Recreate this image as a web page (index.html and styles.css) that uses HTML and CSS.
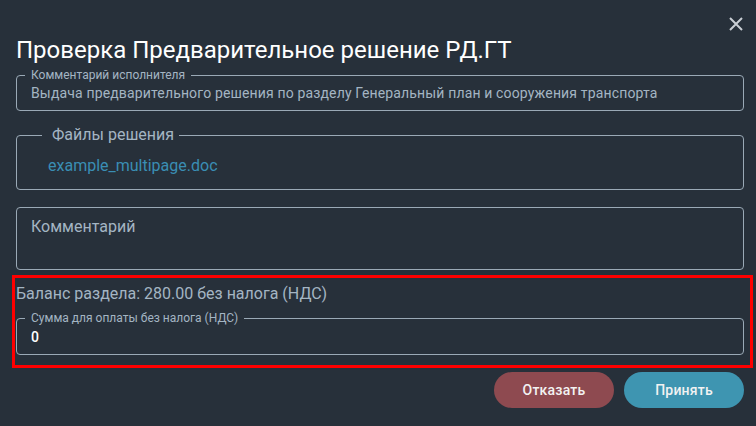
FILE: index.html
```html
<!DOCTYPE html>
<html lang="ru">
<head>
<meta charset="utf-8">
<link rel="stylesheet" href="styles.css">
</head>
<body>
<div class="dialog">
  <button class="close" aria-label="close">
    <svg width="14" height="14" viewBox="0 0 14 14"><path d="M1 1L13 13M13 1L1 13" stroke="#c9ced4" stroke-width="2" fill="none"/></svg>
  </button>
  <h1 class="title">Проверка Предварительное решение РД.ГТ</h1>
  <fieldset class="field small">
    <legend>Комментарий исполнителя</legend>
    <div class="value">Выдача предварительного решения по разделу Генеральный план и сооружения транспорта</div>
  </fieldset>
  <fieldset class="field files">
    <legend>Файлы решения</legend>
    <a class="link" href="#">example_multipage.doc</a>
  </fieldset>
  <div class="comment">Комментарий</div>
  <div class="highlight">
    <div class="balance">Баланс раздела: 280.00 без налога (НДС)</div>
    <fieldset class="field small sum">
      <legend>Сумма для оплаты без налога (НДС)</legend>
      <div class="value num">0</div>
    </fieldset>
  </div>
  <div class="actions">
    <button class="btn reject">Отказать</button>
    <button class="btn accept">Принять</button>
  </div>
</div>
</body>
</html>
```
FILE: styles.css
```css
* { box-sizing: border-box; }
html, body { margin: 0; padding: 0; }
body {
  background: #27303a;
  width: 756px;
  height: 426px;
  overflow: hidden;
  font-family: Roboto, "Noto Sans", sans-serif;
}
.dialog {
  position: relative;
  display: flex;
  flex-direction: column;
  padding: 36px 12px 0 16px;
}
.close {
  position: absolute;
  top: 17px;
  right: 13px;
  width: 14px;
  height: 14px;
  padding: 0;
  border: 0;
  background: none;
  display: flex;
}
.title {
  margin: 0;
  font-size: 24px;
  line-height: 28px;
  font-weight: 400;
  color: #ffffff;
}
.field {
  margin: 4px 0 0 0;
  border: 1px solid #9aa9b6;
  border-radius: 4px;
  min-width: 0;
}
.field.small { padding: 0 14px 9px 14px; }
.field.small legend {
  margin-left: -6px;
  padding: 0 6px;
  font-size: 12px;
  line-height: 14px;
  color: #a4b5c3;
}
.value {
  margin-top: 3px;
  font-size: 14px;
  line-height: 16px;
  letter-spacing: 0.15px;
  color: #a4b5c3;
}
.files {
  margin-top: 15px;
  padding: 0 14px 14px 31px;
}
.files legend {
  margin-left: -6px;
  padding: 0 5px 0 10px;
  font-size: 16px;
  line-height: 18px;
  color: #a4b5c3;
}
.link {
  display: block;
  margin-top: 13px;
  font-size: 16px;
  line-height: 18px;
  color: #3a8eb4;
  text-decoration: none;
}
.comment {
  margin-top: 17px;
  height: 63px;
  border: 1px solid #9aa9b6;
  border-radius: 4px;
  padding: 10px 14px;
  font-size: 16px;
  line-height: 18px;
  color: #a4b5c3;
}
.highlight {
  margin: 5px -9px 0 -4px;
  border: 3px solid #ff0000;
  padding: 7px 6px 10px 1px;
}
.balance {
  font-size: 16px;
  line-height: 18px;
  color: #a4b5c3;
}
.sum { margin-top: 8px; }
.value.num {
  margin-top: 4px;
  color: #ffffff;
  font-weight: 500;
}
.actions {
  margin-top: 4px;
  display: flex;
  justify-content: flex-end;
  gap: 10px;
}
.btn {
  width: 120px;
  height: 36px;
  border: 0;
  border-radius: 18px;
  font-family: Roboto, "Noto Sans", sans-serif;
  font-size: 14px;
  font-weight: 500;
  letter-spacing: 0.2px;
  color: #f2f2f2;
}
.reject { background: #8e4a50; }
.accept { background: #3e95b1; }
```
